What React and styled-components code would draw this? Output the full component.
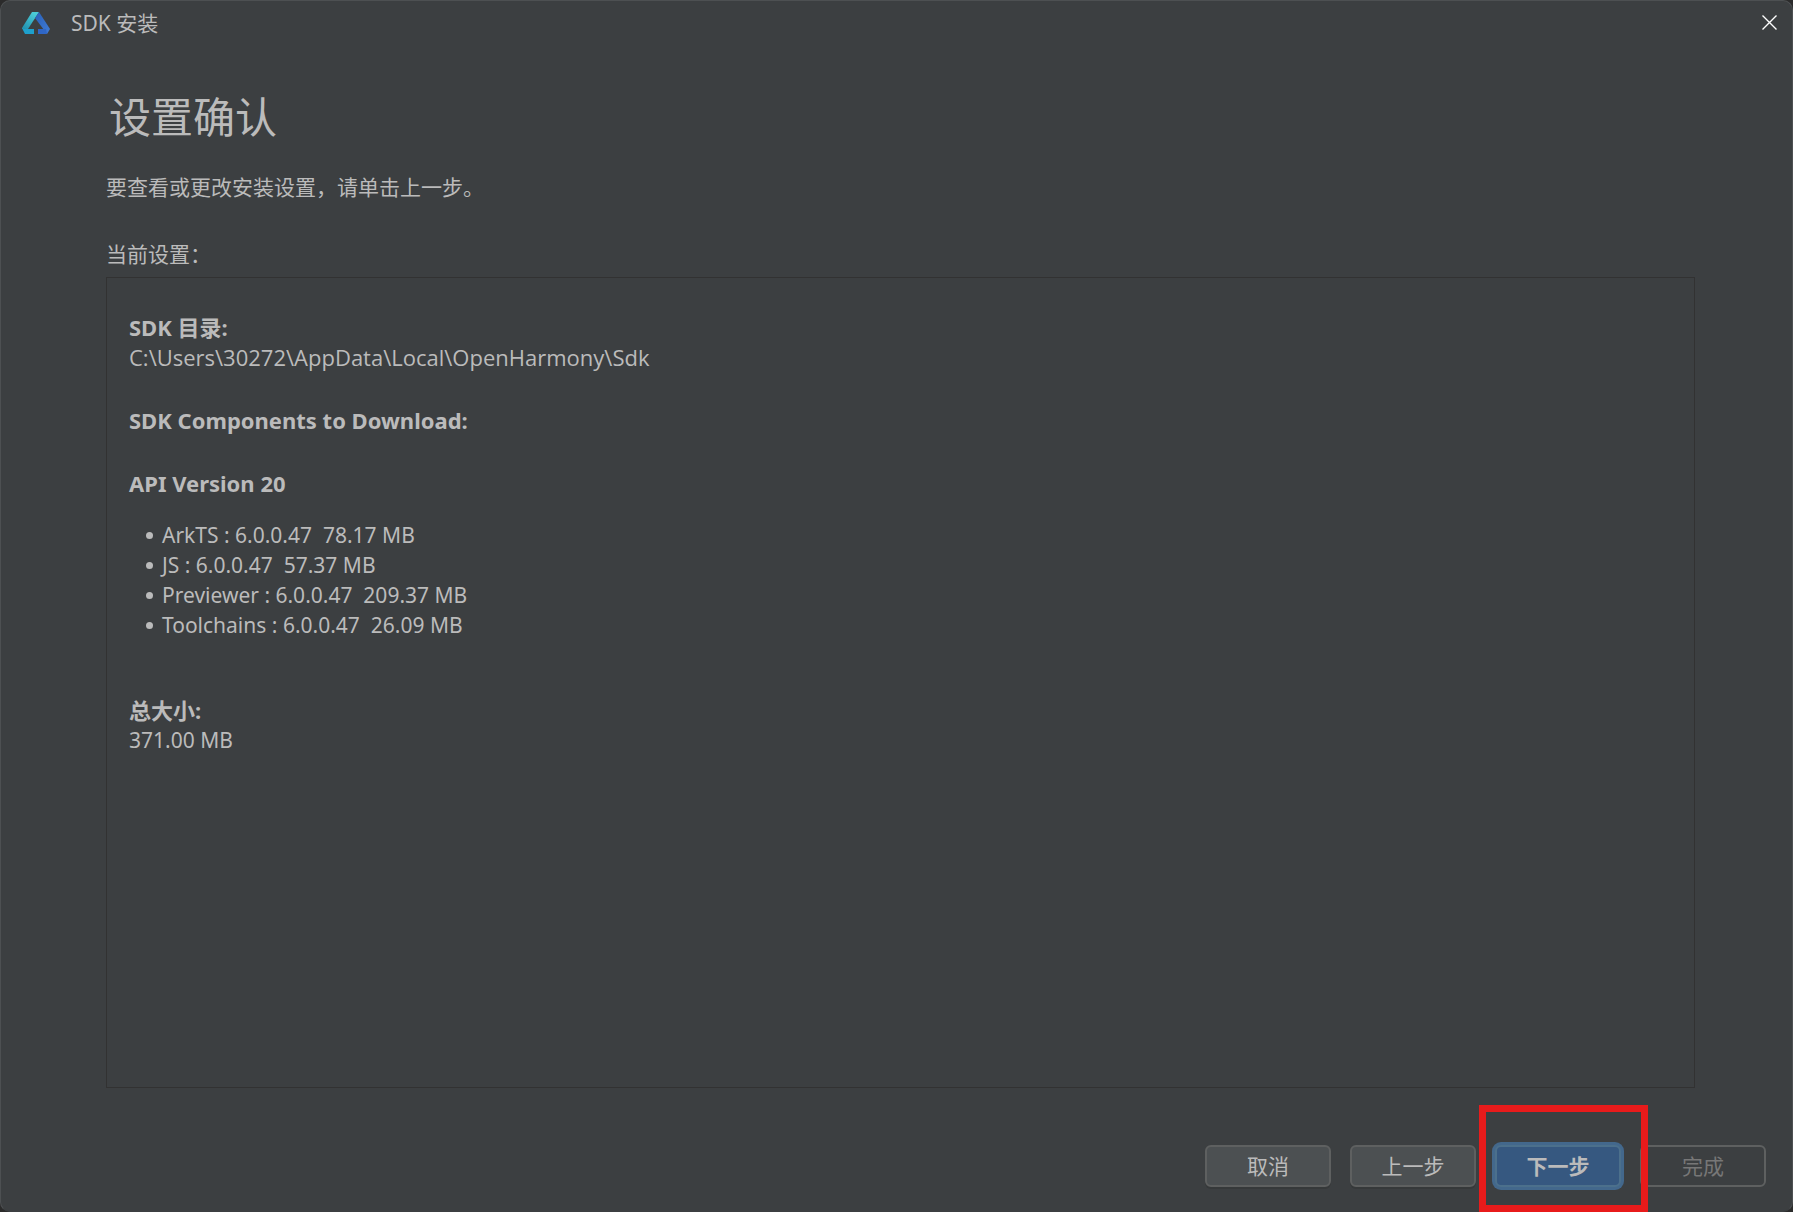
import styled, { createGlobalStyle } from "styled-components";

const components = [
  { name: "ArkTS", version: "6.0.0.47", size: "78.17 MB" },
  { name: "JS", version: "6.0.0.47", size: "57.37 MB" },
  { name: "Previewer", version: "6.0.0.47", size: "209.37 MB" },
  { name: "Toolchains", version: "6.0.0.47", size: "26.09 MB" },
];

const Logo = () => (
  <svg width="28" height="22" viewBox="0 0 28 22" aria-hidden="true">
    <defs>
      <linearGradient id="logoLeft" x1="0" y1="1" x2="0.6" y2="0">
        <stop offset="0" stopColor="#1f8fae" />
        <stop offset="1" stopColor="#4bcbd6" />
      </linearGradient>
      <linearGradient id="logoRight" x1="0" y1="0" x2="1" y2="1">
        <stop offset="0" stopColor="#2860b8" />
        <stop offset="1" stopColor="#417cd6" />
      </linearGradient>
    </defs>
    <path d="M10 0H17L6 17H0V16Z" fill="url(#logoLeft)" />
    <path d="M0 16L1 17H12V22H3Z" fill="#1ea0cc" />
    <path d="M17 0L28 17L25 22L13 6Z" fill="url(#logoRight)" />
    <path d="M16 17H24L25 22H16Z" fill="#2f66c6" />
  </svg>
);

const App = () => {
  return (
    <>
      <GlobalStyle />
      <Dialog>
        <TitleBar>
          <Logo />
          <WindowTitle>SDK 安装</WindowTitle>
          <CloseButton aria-label="关闭">
            <svg width="15" height="15" viewBox="0 0 15 15" aria-hidden="true">
              <path d="M0.5 0.5L14.5 14.5M14.5 0.5L0.5 14.5" stroke="#fff" strokeWidth="1.4" />
            </svg>
          </CloseButton>
        </TitleBar>

        <Content>
          <Heading>设置确认</Heading>
          <Hint>要查看或更改安装设置，请单击上一步。</Hint>
          <Label id="settings-label">当前设置：</Label>
          <Settings aria-labelledby="settings-label">
            <Group>
              <GroupTitle>SDK 目录:</GroupTitle>
              <Path>C:\Users\30272\AppData\Local\OpenHarmony\Sdk</Path>
            </Group>
            <Group>
              <GroupTitle>SDK Components to Download:</GroupTitle>
            </Group>
            <GroupTitle>API Version 20</GroupTitle>
            <ComponentList>
              {components.map(({ name, version, size }) => (
                <li key={name}>
                  {name} : {version}&nbsp; {size}
                </li>
              ))}
            </ComponentList>
            <GroupTitle>总大小:</GroupTitle>
            <p>371.00 MB</p>
          </Settings>
        </Content>

        <Footer>
          <Button>取消</Button>
          <Button>上一步</Button>
          <Highlight>
            <Button $primary>下一步</Button>
          </Highlight>
          <Button disabled>完成</Button>
        </Footer>
      </Dialog>
    </>
  );
};

const GlobalStyle = createGlobalStyle`
  * {
    box-sizing: border-box;
  }

  body {
    margin: 0;
    background-color: #2b2b2b;
    color: #bbb;
    font-family: "Noto Sans", "Noto Sans CJK SC", sans-serif;
    font-size: 21px;
    line-height: 30px;
  }

  h1, h2, p, ul {
    margin: 0;
    padding: 0;
  }
`;

const Dialog = styled.main`
  display: flex;
  flex-direction: column;
  min-height: 100vh;
  background-color: #3c3f41;
  border: 1px solid #4d5052;
  border-bottom-color: #3c3f41;
  border-radius: 10px;
`;

const TitleBar = styled.header`
  display: flex;
  align-items: center;
  height: 43px;
  padding: 0 15px 0 21px;
`;

const WindowTitle = styled.span`
  flex: 1;
  margin-left: 21px;
`;

const CloseButton = styled.button`
  display: flex;
  padding: 0;
  border: 0;
  background: none;
`;

const Content = styled.div`
  display: flex;
  flex: 1;
  flex-direction: column;
  padding: 43px 97px 0 105px;
`;

const Heading = styled.h1`
  padding-left: 3px;
  font-size: 42px;
  font-weight: 400;
  line-height: 60px;
`;

const Hint = styled.p`
  margin-top: 25px;
`;

const Label = styled.p`
  margin-top: 37px;
`;

const Settings = styled.section`
  flex: 1;
  margin-top: 8px;
  padding: 34px 22px;
  border: 1px solid #323232;
`;

const Group = styled.div`
  margin-bottom: 33px;
`;

const GroupTitle = styled.h2`
  font-size: 22px;
  font-weight: 700;
`;

const Path = styled.p`
  font-family: "Open Sans", sans-serif;
  font-size: 22px;
`;

const ComponentList = styled.ul`
  margin: 22px 0 55px;
  padding-left: 17px;
  list-style: none;

  li {
    display: flex;
    align-items: center;
    gap: 9px;
  }

  li::before {
    content: "";
    width: 7px;
    height: 7px;
    border-radius: 50%;
    background-color: #bbb;
  }
`;

const Footer = styled.footer`
  display: flex;
  justify-content: flex-end;
  gap: 19px;
  padding: 57px 26px 24px;
`;

const Button = styled.button`
  width: 126px;
  height: 42px;
  padding: 0;
  border: 2px solid ${({ $primary }) => ($primary ? "#4c708c" : "#5e6060")};
  border-radius: 6px;
  background-color: ${({ $primary }) => ($primary ? "#365880" : "#4c5052")};
  box-shadow: ${({ $primary }) => ($primary ? "0 0 0 3px #43688c" : "0 2px 0 #36393a")};
  color: #bbb;
  font-family: inherit;
  font-size: 21px;
  font-weight: ${({ $primary }) => ($primary ? 700 : 400)};
  line-height: 30px;

  &:disabled {
    background: none;
    box-shadow: none;
    color: #777;
  }
`;

const Highlight = styled.div`
  position: relative;

  /* red marker drawn over the button row */
  &::after {
    content: "";
    position: absolute;
    inset: -40px -27px -25px -16px;
    border: 7px solid #e81b1b;
    pointer-events: none;
    z-index: 1;
  }
`;

export default App;
